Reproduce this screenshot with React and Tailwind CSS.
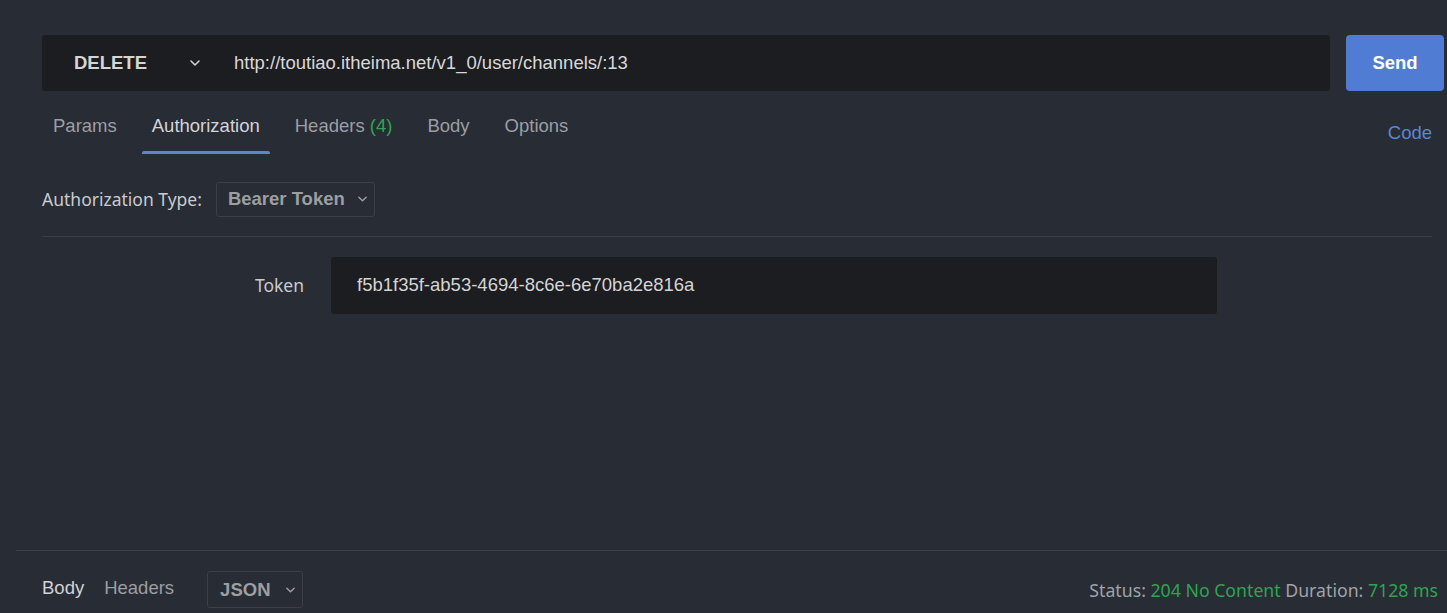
import React from "react";

const Chevron = ({ className = "" }) => (
  <svg viewBox="0 0 12 8" className={className} fill="none" stroke="currentColor" strokeWidth="1.6" strokeLinecap="round" strokeLinejoin="round">
    <path d="M2 2 L6 6 L10 2" />
  </svg>
);

export default function App() {
  const arial = { fontFamily: '"Liberation Sans", Arial, sans-serif' };
  const segoe = { fontFamily: '"Noto Sans", "Open Sans", sans-serif' };
  return (
    <div className="w-[1447px] h-[613px] bg-[#282c35] overflow-hidden flex flex-col" style={arial}>
      <div className="flex-1 flex flex-col pl-[42px] pr-[3px] pt-[35px]">
        {/* URL row */}
        <div className="flex gap-4 h-[56px]">
          <div className="flex-1 flex items-center bg-[#1c1d21] rounded-[3px] pl-[32px]">
            <span className="w-[115px] text-[18.5px] font-bold text-[#d5d5d5]">DELETE</span>
            <Chevron className="w-[12px] h-[8px] text-[#cfcfcf]" />
            <span className="ml-[33px] text-[18.5px] text-[#d8d8d8] whitespace-nowrap">http://toutiao.itheima.net/v1_0/user/channels/:13</span>
          </div>
          <button className="w-[98px] bg-[#507cd3] rounded-[4px] text-white text-[18.5px] font-bold">Send</button>
        </div>
        {/* Tabs */}
        <div className="flex items-start justify-between pr-[12px]">
          <div className="flex pt-[24px] pl-[11px] text-[18.5px] leading-[21px] text-[#9b9ea4] gap-[35px] whitespace-nowrap">
            <span>Params</span>
            <span className="relative text-[#d2d4d8]">
              Authorization
              <span className="absolute left-[-10px] right-[-10px] top-[36px] h-[3px] bg-[#5b86d6] rounded-t-[2px]" />
            </span>
            <span>Headers <span className="text-[#2fa44f]">(4)</span></span>
            <span>Body</span>
            <span>Options</span>
          </div>
          <span className="text-[18.5px] text-[#5b86d6] pt-[28px]">Code</span>
        </div>
        {/* Authorization type */}
        <div className="flex items-center mt-[35px] h-[35px]">
          <span className="text-[17.5px] text-[#c9cbcf] mr-[14px] whitespace-nowrap" style={segoe}>Authorization Type:</span>
          <div className="flex items-center h-[35px] w-[159px] pl-[11px] border border-[#3c3f47] rounded-[3px] whitespace-nowrap">
            <span className="text-[18.5px] font-bold text-[#9c9ea2]">Bearer Token</span>
            <Chevron className="ml-[12px] w-[11px] h-[8px] text-[#9c9ea2]" />
          </div>
        </div>
        <div className="h-px bg-[#3a3e46] mt-[19px] mr-[12px]" />
        {/* Token */}
        <div className="flex items-center mt-[20px]">
          <span className="w-[289px] text-right text-[17.5px] text-[#c9cbcf] pr-[27px]" style={segoe}>Token</span>
          <div className="w-[886px] h-[57px] bg-[#1c1d21] rounded-[3px] flex items-center pl-[26px]">
            <span className="text-[18.5px] text-[#d4d4d4]">f5b1f35f-ab53-4694-8c6e-6e70ba2e816a</span>
          </div>
        </div>
      </div>
      {/* Bottom */}
      <div className="ml-[16px] border-t border-[#3a3e46] h-[63px] flex items-start justify-between pl-[26px] pr-[9px]">
        <div className="flex items-start">
          <span className="mt-[26px] text-[18.5px] leading-[21px] text-[#d0d2d6]">Body</span>
          <span className="mt-[26px] text-[18.5px] leading-[21px] text-[#9b9ea4] ml-[20px]">Headers</span>
          <div className="ml-[33px] mt-[20px] flex items-center h-[37px] w-[96px] pl-[12px] border border-[#3c3f47] rounded-[3px]">
            <span className="text-[18.5px] font-bold text-[#9c9ea2]">JSON</span>
            <Chevron className="ml-[14px] w-[11px] h-[8px] text-[#9c9ea2]" />
          </div>
        </div>
        <div className="mt-[27px] text-[17.7px] leading-[24px] whitespace-nowrap" style={segoe}>
          <span className="text-[#9fa2a8]">Status: </span>
          <span className="text-[#2fa44f]">204 No Content </span>
          <span className="text-[#9fa2a8]">Duration: </span>
          <span className="text-[#2fa44f]">7128 ms</span>
        </div>
      </div>
    </div>
  );
}
